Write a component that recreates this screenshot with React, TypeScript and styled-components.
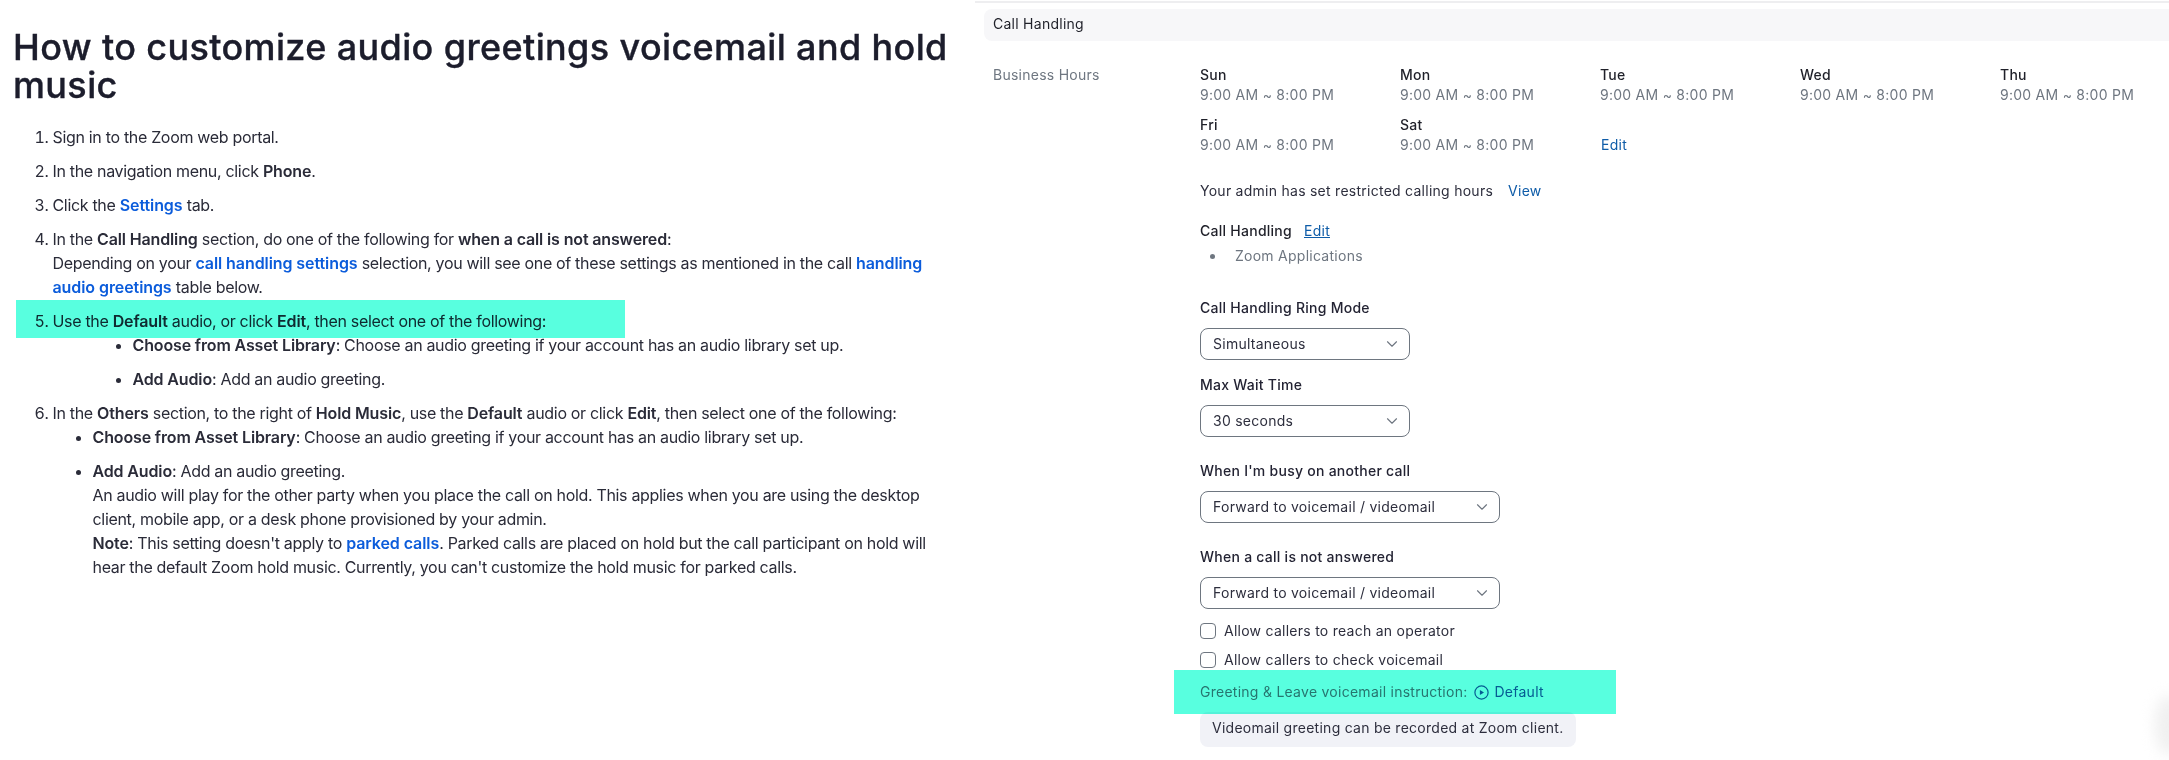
import React from "react";
import styled, { createGlobalStyle } from "styled-components";
import { ChevronDown } from "lucide-react";

const Global = createGlobalStyle`
  html, body { margin: 0; padding: 0; background: #fff; }
  body { font-family: Inter, "Liberation Sans", sans-serif; overflow: hidden; }
`;

const Page = styled.div`
  position: relative;
  display: flex;
  width: 2169px;
  height: 760px;
  overflow: hidden;
  background: #fff;
`;

const Article = styled.article`
  flex: none;
  box-sizing: border-box;
  width: 975px;
  padding: 28px 20px 0 13px;
  color: #2a2b38;
`;

const Title = styled.h1`
  margin: 0 0 21px;
  font-size: 36px;
  line-height: 38px;
  font-weight: 500;
  letter-spacing: 0.37px;
  -webkit-text-stroke: 0.35px #1c1d2c;
  color: #1c1d2c;
`;

const Steps = styled.ol`
  margin: 0;
  padding: 0 0 0 39.5px;
  font-size: 16px;
  line-height: 24px;
  letter-spacing: -0.32px;
`;

const Step = styled.li`
  position: relative;
  margin-bottom: 10px;
`;

const Bullets = styled.ul<{ $indent: number }>`
  margin: 0;
  padding: 0 0 0 ${(p) => p.$indent}px;
  list-style: disc;
`;

const Bullet = styled.li`
  margin-bottom: 10px;
  &:last-child { margin-bottom: 0; }
`;

const DocLink = styled.a`
  color: #0b5cdb;
  font-weight: 600;
  letter-spacing: -0.08px;
`;

const Strong = styled.b`
  font-weight: 600;
  letter-spacing: -0.14px;
`;

const Highlight = styled.div<{ $left: number; $top: number; $w: number; $h: number }>`
  position: absolute;
  left: ${(p) => p.$left}px;
  top: ${(p) => p.$top}px;
  width: ${(p) => p.$w}px;
  height: ${(p) => p.$h}px;
  background: #58ffdf;
  mix-blend-mode: multiply;
  pointer-events: none;
`;

const Panel = styled.section`
  flex: 1;
  min-width: 0;
  margin-top: 1px;
  border-top: 2px solid #eeeef0;
  padding: 6px 0 0 9px;
  font-size: 14px;
  line-height: 20px;
  color: #2d2e3d;
  letter-spacing: 0.26px;
`;

const SectionBar = styled.div`
  box-sizing: border-box;
  height: 32px;
  display: flex;
  align-items: center;
  padding: 0 0 2px 9px;
  background: #f7f7f9;
  border-radius: 8px 0 0 8px;
  color: #1f2029;
`;

const Settings = styled.div`
  display: grid;
  grid-template-columns: 207px 1fr;
  padding: 24px 0 0 9px;
`;

const RowLabel = styled.div`
  color: #6e7680;
`;

const Content = styled.div`
  display: flex;
  flex-direction: column;
  align-items: flex-start;
`;

const HoursGrid = styled.div`
  display: grid;
  grid-template-columns: repeat(5, 200px);
  row-gap: 10px;
`;

const Day = styled.div`
  font-weight: 500;
  color: #1f2029;
`;

const Time = styled.div`
  color: #6e7680;
`;

const EditCell = styled.div`
  padding: 20px 0 0 1px;
`;

const Action = styled.a`
  color: #0e5ca8;
`;

const Notice = styled.div`
  margin-top: 26px;
  display: flex;
  gap: 15px;
`;

const InlineHead = styled.div`
  margin-top: 20px;
  display: flex;
  gap: 12px;
`;

const FieldLabel = styled.div<{ $top: number }>`
  margin-top: ${(p) => p.$top}px;
  font-weight: 500;
  color: #232333;
`;

const UnderAction = styled(Action)`
  text-decoration: underline;
`;

const MethodList = styled.ul`
  margin: 5px 0 0;
  padding: 0;
  list-style: none;
  color: #6e7680;
`;

const Method = styled.li`
  display: flex;
  align-items: center;
  &::before {
    content: "";
    width: 5px;
    height: 5px;
    margin: 0 20px 0 10px;
    border-radius: 50%;
    background: #6e7680;
  }
`;

const Select = styled.div<{ $w: number }>`
  box-sizing: border-box;
  width: ${(p) => p.$w}px;
  height: 32px;
  margin-top: 10px;
  padding: 0 8px 1px 12px;
  display: flex;
  align-items: center;
  justify-content: space-between;
  border: 1px solid #6e7680;
  border-radius: 8px;
  color: #2d2e3d;
`;

const Check = styled.label<{ $top: number }>`
  margin-top: ${(p) => p.$top}px;
  display: flex;
  align-items: center;
  gap: 8px;
`;

const Box = styled.span`
  box-sizing: border-box;
  width: 16px;
  height: 16px;
  border: 1px solid #6e7680;
  border-radius: 4px;
  background: #fff;
`;

const GreetingRow = styled.div`
  position: relative;
  margin-top: 12px;
  display: flex;
  align-items: center;
  color: #6e7680;
`;

const PlayLink = styled(Action)`
  display: inline-flex;
  align-items: center;
  gap: 5px;
  margin-left: 7px;
`;

const Tip = styled.div`
  box-sizing: border-box;
  margin-top: 10px;
  height: 35px;
  padding: 0 12px 3px;
  display: flex;
  align-items: center;
  background: #f1f2f7;
  border-radius: 8px;
  color: #2d2e3d;
`;

const CornerShade = styled.div`
  position: absolute;
  right: -14px;
  top: 695px;
  width: 28px;
  height: 60px;
  border-radius: 50%;
  background: #f0f0f0;
  filter: blur(7px);
`;

const PlayIcon = () => (
  <svg width="15" height="15" viewBox="0 0 15 15" fill="none" aria-hidden="true">
    <circle cx="7.5" cy="7.5" r="6.6" stroke="#0e5ca8" strokeWidth="1.2" />
    <path d="M5.9 4.9 10 7.5 5.9 10.1Z" fill="#0e5ca8" />
  </svg>
);

const days = ["Sun", "Mon", "Tue", "Wed", "Thu", "Fri", "Sat"];

const Dropdown = ({ w, children }: { w: number; children: React.ReactNode }) => (
  <Select $w={w}>
    {children}
    <ChevronDown size={18} strokeWidth={1.5} color="#6e7680" />
  </Select>
);

export default function App() {
  return (
    <Page>
      <Global />
      <Article>
        <Title>How to customize audio greetings voicemail and hold music</Title>
        <Steps>
          <Step>Sign in to the Zoom web portal.</Step>
          <Step>In the navigation menu, click <Strong>Phone</Strong>.</Step>
          <Step>Click the <DocLink>Settings</DocLink> tab.</Step>
          <Step>
            In the <Strong>Call Handling</Strong> section, do one of the following for <Strong>when a call is not answered</Strong>:
            <br />
            Depending on your <DocLink>call handling settings</DocLink> selection, you will see one of these settings as mentioned in the call <DocLink>handling audio greetings</DocLink> table below.
          </Step>
          <Step>
            <Highlight $left={-36.5} $top={-9} $w={609} $h={38} />
            Use the <Strong>Default</Strong> audio, or click <Strong>Edit</Strong>, then select one of the following:
            <Bullets $indent={80}>
              <Bullet><Strong>Choose from Asset Library</Strong>: Choose an audio greeting if your account has an audio library set up.</Bullet>
              <Bullet><Strong>Add Audio</Strong>: Add an audio greeting.</Bullet>
            </Bullets>
          </Step>
          <Step>
            In the <Strong>Others</Strong> section, to the right of <Strong>Hold Music</Strong>, use the <Strong>Default</Strong> audio or click <Strong>Edit</Strong>, then select one of the following:
            <Bullets $indent={40}>
              <Bullet><Strong>Choose from Asset Library</Strong>: Choose an audio greeting if your account has an audio library set up.</Bullet>
              <Bullet>
                <Strong>Add Audio</Strong>: Add an audio greeting.
                <br />
                An audio will play for the other party when you place the call on hold. This applies when you are using the desktop client, mobile app, or a desk phone provisioned by your admin.
                <br />
                <Strong>Note</Strong>: This setting doesn't apply to <DocLink>parked calls</DocLink>. Parked calls are placed on hold but the call participant on hold will hear the default Zoom hold music. Currently, you can't customize the hold music for parked calls.
              </Bullet>
            </Bullets>
          </Step>
        </Steps>
      </Article>
      <Panel>
        <SectionBar>Call Handling</SectionBar>
        <Settings>
          <RowLabel>Business Hours</RowLabel>
          <Content>
            <HoursGrid>
              {days.map((d) => (
                <div key={d}>
                  <Day>{d}</Day>
                  <Time>9:00 AM ~ 8:00 PM</Time>
                </div>
              ))}
              <EditCell><Action>Edit</Action></EditCell>
            </HoursGrid>
            <Notice>
              <span>Your admin has set restricted calling hours</span>
              <Action>View</Action>
            </Notice>
            <InlineHead>
              <Day>Call Handling</Day>
              <UnderAction>Edit</UnderAction>
            </InlineHead>
            <MethodList><Method>Zoom Applications</Method></MethodList>
            <FieldLabel $top={32}>Call Handling Ring Mode</FieldLabel>
            <Dropdown w={210}>Simultaneous</Dropdown>
            <FieldLabel $top={15}>Max Wait Time</FieldLabel>
            <Dropdown w={210}>30 seconds</Dropdown>
            <FieldLabel $top={24}>When I'm busy on another call</FieldLabel>
            <Dropdown w={300}>Forward to voicemail / videomail</Dropdown>
            <FieldLabel $top={24}>When a call is not answered</FieldLabel>
            <Dropdown w={300}>Forward to voicemail / videomail</Dropdown>
            <Check $top={12}><Box />Allow callers to reach an operator</Check>
            <Check $top={9}><Box />Allow callers to check voicemail</Check>
            <GreetingRow>
              <Highlight $left={-26} $top={-12} $w={442} $h={44} />
              Greeting &amp; Leave voicemail instruction:
              <PlayLink><PlayIcon />Default</PlayLink>
            </GreetingRow>
            <Tip>Videomail greeting can be recorded at Zoom client.</Tip>
          </Content>
        </Settings>
      </Panel>
      <CornerShade />
    </Page>
  );
}
